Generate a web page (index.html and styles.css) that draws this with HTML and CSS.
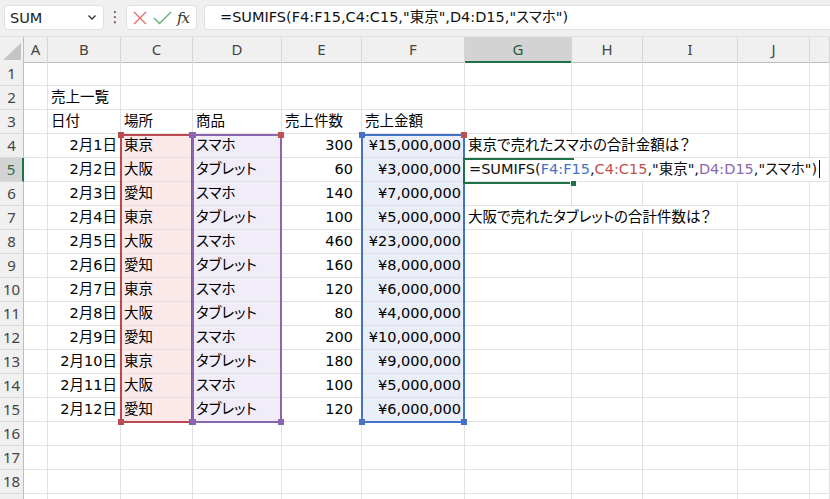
FILE: index.html
```html
<!DOCTYPE html>
<html lang="ja">
<head>
<meta charset="utf-8">
<title>SUMIFS</title>
<link rel="stylesheet" href="styles.css">
</head>
<body>
<div class="toolbar">
  <div class="namebox"><span>SUM</span>
    <svg class="chev" width="10" height="7" viewBox="0 0 10 7"><polyline points="1.5,1.5 5,5 8.5,1.5" fill="none" stroke="#333" stroke-width="1.4"/></svg>
  </div>
  <div class="dots">⋮</div>
  <div class="funcbox">
    <svg width="16" height="16" viewBox="0 0 16 16"><path d="M2 2 L14 14 M14 2 L2 14" stroke="#e06b6b" stroke-width="1.3" fill="none"/></svg>
    <svg width="19" height="14" viewBox="0 0 19 14"><polyline points="1,7 6.5,12.5 18,1" stroke="#5fae73" stroke-width="1.3" fill="none"/></svg>
    <span class="fx">fx</span>
  </div>
  <div class="formula">=SUMIFS(F4:F15,C4:C15,"東京",D4:D15,"スマホ")</div>
</div>

<div class="sheet">
  <div class="row head">
    <div class="c corner"><svg width="24" height="25" viewBox="0 0 24 25"><polygon points="21,6 21,23 3,23" fill="#c4c4c4"/></svg></div>
    <div class="c ch">A</div><div class="c ch">B</div><div class="c ch">C</div><div class="c ch">D</div><div class="c ch">E</div><div class="c ch">F</div><div class="c ch sel">G</div><div class="c ch">H</div><div class="c ch">I</div><div class="c ch">J</div><div class="c ch"></div>
  </div>
  <div class="row"><div class="c rh">1</div><div class="c"></div><div class="c"></div><div class="c"></div><div class="c"></div><div class="c"></div><div class="c"></div><div class="c"></div><div class="c"></div><div class="c"></div><div class="c"></div><div class="c"></div></div>
  <div class="row"><div class="c rh">2</div><div class="c"></div><div class="c">売上一覧</div><div class="c"></div><div class="c"></div><div class="c"></div><div class="c"></div><div class="c"></div><div class="c"></div><div class="c"></div><div class="c"></div><div class="c"></div></div>
  <div class="row"><div class="c rh">3</div><div class="c"></div><div class="c">日付</div><div class="c">場所</div><div class="c">商品</div><div class="c">売上件数</div><div class="c">売上金額</div><div class="c"></div><div class="c"></div><div class="c"></div><div class="c"></div><div class="c"></div></div>
  <div class="row"><div class="c rh">4</div><div class="c"></div><div class="c r">2月1日</div><div class="c red">東京</div><div class="c pur">スマホ</div><div class="c r num">300</div><div class="c r blu">¥15,000,000</div><div class="c span3">東京で売れたスマホの合計金額は？</div><div class="c"></div><div class="c"></div></div>
  <div class="row"><div class="c rh sel">5</div><div class="c"></div><div class="c r">2月2日</div><div class="c red">大阪</div><div class="c pur">タブレット</div><div class="c r num">60</div><div class="c r blu">¥3,000,000</div><div class="c span5 edit">=SUMIFS(<span class="tb">F4:F15</span>,<span class="tr">C4:C15</span>,"東京",<span class="tp">D4:D15</span>,"スマホ")<span class="caret"></span></div></div>
  <div class="row"><div class="c rh">6</div><div class="c"></div><div class="c r">2月3日</div><div class="c red">愛知</div><div class="c pur">スマホ</div><div class="c r num">140</div><div class="c r blu">¥7,000,000</div><div class="c"></div><div class="c"></div><div class="c"></div><div class="c"></div><div class="c"></div></div>
  <div class="row"><div class="c rh">7</div><div class="c"></div><div class="c r">2月4日</div><div class="c red">東京</div><div class="c pur">タブレット</div><div class="c r num">100</div><div class="c r blu">¥5,000,000</div><div class="c span3">大阪で売れたタブレットの合計件数は？</div><div class="c"></div><div class="c"></div></div>
  <div class="row"><div class="c rh">8</div><div class="c"></div><div class="c r">2月5日</div><div class="c red">大阪</div><div class="c pur">スマホ</div><div class="c r num">460</div><div class="c r blu">¥23,000,000</div><div class="c"></div><div class="c"></div><div class="c"></div><div class="c"></div><div class="c"></div></div>
  <div class="row"><div class="c rh">9</div><div class="c"></div><div class="c r">2月6日</div><div class="c red">愛知</div><div class="c pur">タブレット</div><div class="c r num">160</div><div class="c r blu">¥8,000,000</div><div class="c"></div><div class="c"></div><div class="c"></div><div class="c"></div><div class="c"></div></div>
  <div class="row"><div class="c rh">10</div><div class="c"></div><div class="c r">2月7日</div><div class="c red">東京</div><div class="c pur">スマホ</div><div class="c r num">120</div><div class="c r blu">¥6,000,000</div><div class="c"></div><div class="c"></div><div class="c"></div><div class="c"></div><div class="c"></div></div>
  <div class="row"><div class="c rh">11</div><div class="c"></div><div class="c r">2月8日</div><div class="c red">大阪</div><div class="c pur">タブレット</div><div class="c r num">80</div><div class="c r blu">¥4,000,000</div><div class="c"></div><div class="c"></div><div class="c"></div><div class="c"></div><div class="c"></div></div>
  <div class="row"><div class="c rh">12</div><div class="c"></div><div class="c r">2月9日</div><div class="c red">愛知</div><div class="c pur">スマホ</div><div class="c r num">200</div><div class="c r blu">¥10,000,000</div><div class="c"></div><div class="c"></div><div class="c"></div><div class="c"></div><div class="c"></div></div>
  <div class="row"><div class="c rh">13</div><div class="c"></div><div class="c r">2月10日</div><div class="c red">東京</div><div class="c pur">タブレット</div><div class="c r num">180</div><div class="c r blu">¥9,000,000</div><div class="c"></div><div class="c"></div><div class="c"></div><div class="c"></div><div class="c"></div></div>
  <div class="row"><div class="c rh">14</div><div class="c"></div><div class="c r">2月11日</div><div class="c red">大阪</div><div class="c pur">スマホ</div><div class="c r num">100</div><div class="c r blu">¥5,000,000</div><div class="c"></div><div class="c"></div><div class="c"></div><div class="c"></div><div class="c"></div></div>
  <div class="row"><div class="c rh">15</div><div class="c"></div><div class="c r">2月12日</div><div class="c red">愛知</div><div class="c pur">タブレット</div><div class="c r num">120</div><div class="c r blu">¥6,000,000</div><div class="c"></div><div class="c"></div><div class="c"></div><div class="c"></div><div class="c"></div></div>
  <div class="row"><div class="c rh">16</div><div class="c"></div><div class="c"></div><div class="c"></div><div class="c"></div><div class="c"></div><div class="c"></div><div class="c"></div><div class="c"></div><div class="c"></div><div class="c"></div><div class="c"></div></div>
  <div class="row"><div class="c rh">17</div><div class="c"></div><div class="c"></div><div class="c"></div><div class="c"></div><div class="c"></div><div class="c"></div><div class="c"></div><div class="c"></div><div class="c"></div><div class="c"></div><div class="c"></div></div>
  <div class="row"><div class="c rh">18</div><div class="c"></div><div class="c"></div><div class="c"></div><div class="c"></div><div class="c"></div><div class="c"></div><div class="c"></div><div class="c"></div><div class="c"></div><div class="c"></div><div class="c"></div></div>
  <div class="row last"><div class="c rh"></div><div class="c"></div><div class="c"></div><div class="c"></div><div class="c"></div><div class="c"></div><div class="c"></div><div class="c"></div><div class="c"></div><div class="c"></div><div class="c"></div><div class="c"></div></div>

  <div class="range rng-c"><i class="h tl"></i><i class="h tr"></i><i class="h bl"></i><i class="h br"></i></div>
  <div class="range rng-d"><i class="h tl"></i><i class="h tr"></i><i class="h bl"></i><i class="h br"></i></div>
  <div class="range rng-f"><i class="h tl"></i><i class="h tr"></i><i class="h bl"></i><i class="h br"></i></div>
  <div class="active"><i class="h br"></i></div>
</div>
</body>
</html>
```

FILE: styles.css
```css
* { box-sizing: border-box; margin: 0; padding: 0; }

body {
  width: 830px;
  height: 499px;
  overflow: hidden;
  background: #fff;
  color: #000;
  font-family: "DejaVu Sans", "Noto Sans CJK JP", sans-serif;
  font-size: 14.5px;
  font-feature-settings: "palt";
}

/* ---------- formula toolbar ---------- */
.toolbar {
  height: 37px;
  background: #f0f0f0;
  display: flex;
  align-items: flex-start;
  padding: 5px 0 0 4px;
  border-bottom: 1px solid #e2e2e2;
}

.namebox {
  width: 100px;
  height: 25px;
  background: #fff;
  border: 1px solid #e0e0e0;
  border-radius: 4px;
  display: flex;
  align-items: center;
  justify-content: space-between;
  padding: 0 6px 0 5px;
  color: #222;
  font-size: 14.5px;
}

.dots {
  width: 22px;
  height: 25px;
  line-height: 25px;
  text-align: center;
  color: #444;
  font-size: 15px;
}

.funcbox {
  width: 71px;
  height: 25px;
  background: #fff;
  border: 1px solid #e0e0e0;
  border-radius: 4px;
  display: flex;
  align-items: center;
  gap: 5px;
  padding-left: 5px;
}

.fx {
  font-family: "DejaVu Serif", "Liberation Serif", serif;
  font-style: italic;
  font-size: 15px;
  color: #333;
  letter-spacing: -1px;
}

.formula {
  flex: 1;
  height: 25px;
  margin-left: 7px;
  background: #fff;
  border: 1px solid #e0e0e0;
  border-right: none;
  border-radius: 4px 0 0 4px;
  padding-left: 15px;
  line-height: 23px;
  white-space: nowrap;
  color: #111;
}

/* ---------- sheet ---------- */
.sheet { position: relative; }

.row {
  display: grid;
  grid-template-columns: 24px 24px 73px 72px 89px 80px 103px 107px 71px 95px 72px 1fr;
  height: 24px;
}
.row.head { height: 25px; }
.row.last { height: 6px; overflow: hidden; }

.c {
  border-right: 1px solid #e1e1e1;
  border-bottom: 1px solid #e1e1e1;
  line-height: 23px;
  padding: 0 3px;
  white-space: nowrap;
}
.r { text-align: right; }
.num { padding-right: 8px; }

.ch {
  background: #f0f0f0;
  text-align: center;
  color: #444;
  line-height: 24px;
  border-right-color: #d6d6d6;
  border-bottom-color: #bdbdbd;
  font-family: "Noto Sans", sans-serif;
  font-size: 15px;
}
.ch.sel {
  background: #d3d3d3;
  color: #275d3b;
  border-bottom: 2px solid #1e7145;
}
.corner {
  background: #f0f0f0;
  padding: 0;
  border-right-color: #bdbdbd;
  border-bottom-color: #bdbdbd;
}
.corner svg { display: block; }

.rh {
  background: #f0f0f0;
  text-align: center;
  padding: 0;
  color: #444;
  border-right-color: #bdbdbd;
  border-bottom-color: #dadada;
  font-family: "Noto Sans", sans-serif;
  font-size: 15px;
}
.rh.sel {
  background: #d3d3d3;
  color: #2e6a45;
  border-right: 2px solid #1e7145;
}

.red { background: #fbe9ea; }
.pur { background: #f0ecf8; }
.blu { background: #e9eef8; }

.span3 { grid-column: span 3; }
.span5 { grid-column: span 5; }

.edit { padding-left: 4px; color: #111; }
.tb { color: #4472c4; }
.tr { color: #c0504d; }
.tp { color: #8a66b2; }
.caret {
  display: inline-block;
  width: 1px;
  height: 18px;
  background: #000;
  vertical-align: -4px;
  margin-left: 2px;
}

/* ---------- range highlight overlays ---------- */
.range {
  position: absolute;
  border: 2px solid;
  pointer-events: none;
}
.rng-c { left: 120px; top: 97px; width: 73px; height: 289px; border-color: #bb4a50; color: #bb4a50; }
.rng-d { left: 192px; top: 97px; width: 90px; height: 289px; border-color: #8a66b2; color: #8a66b2; }
.rng-f { left: 361px; top: 97px; width: 104px; height: 289px; border-color: #4472c4; color: #4472c4; }

.h {
  position: absolute;
  width: 6px;
  height: 6px;
  background: currentColor;
}
.h.tl { left: -4px; top: -4px; }
.h.tr { right: -4px; top: -4px; }
.h.bl { left: -4px; bottom: -4px; }
.h.br { right: -4px; bottom: -4px; }

.active {
  position: absolute;
  left: 463px;
  top: 121px;
  width: 111px;
  height: 26px;
  border: 2px solid #1e7145;
  border-right: none;
  color: #1e7145;
}
.active .h.br { right: -3px; bottom: -5px; border: 1px solid #fff; width: 7px; height: 7px; }
```
